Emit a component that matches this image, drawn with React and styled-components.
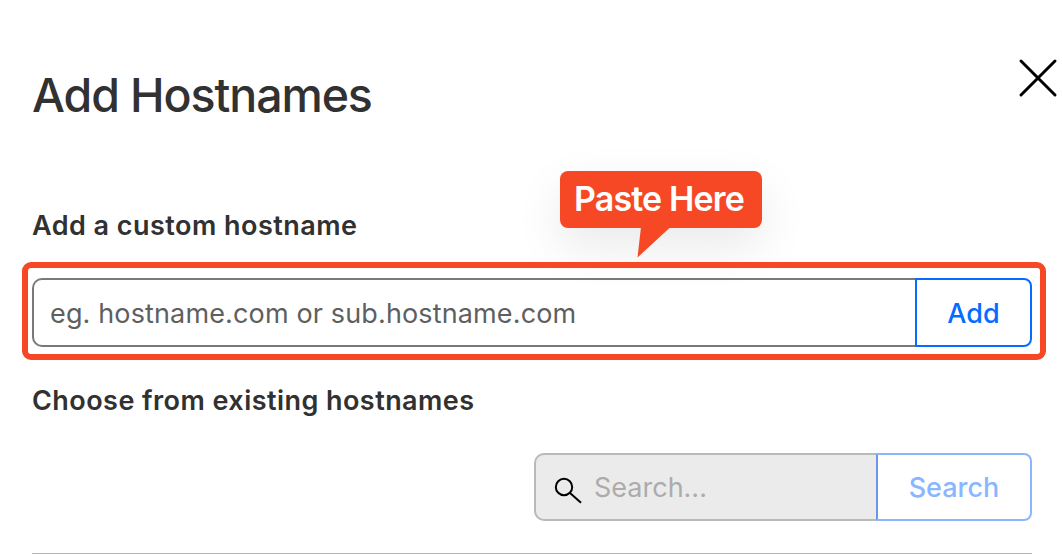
import { useState } from 'react';
import styled, { createGlobalStyle } from 'styled-components'

const GlobalStyle = createGlobalStyle`
*{
    box-sizing:border-box;
}
body{
    margin:0;
    background:#fff;
    overflow:hidden;
    font-family:Inter, "Liberation Sans", sans-serif;
}
`

export default () => {
    let [hostname, setHostname] = useState('');
    return (
        <Dialog>
            <GlobalStyle />
            <Header>
                <Title>Add Hostnames</Title>
                <Close aria-label="Close">
                    <svg width="40" height="40" viewBox="0 0 40 40" fill="none" stroke="#000" strokeWidth="3" strokeLinecap="round">
                        <path d="M3 3L37 37M37 3L3 37" />
                    </svg>
                </Close>
            </Header>
            <LabelRow>
                <Label spacing="0.47px">Add a custom hostname</Label>
                <Callout>
                    Paste Here
                    <Tail width="34" height="31" viewBox="0 0 34 31">
                        <path d="M4 0H33V0.5L0.5 30.5Z" fill="#f64825" />
                    </Tail>
                </Callout>
            </LabelRow>
            <Highlight>
                <Group>
                    <Input
                        value={hostname}
                        placeholder="eg. hostname.com or sub.hostname.com"
                        onChange={e => setHostname(e.target.value)}
                    />
                    <Button width="117px">Add</Button>
                </Group>
            </Highlight>
            <Existing spacing="0.45px">Choose from existing hostnames</Existing>
            <SearchGroup>
                <SearchBox>
                    <svg width="30" height="30" viewBox="0 0 30 30" fill="none" stroke="#000" strokeWidth="2">
                        <circle cx="11" cy="11" r="8.2" />
                        <path d="M17 17L28 26.7" />
                    </svg>
                    <SearchInput placeholder="Search..." disabled />
                </SearchBox>
                <Button width="156px" disabled>Search</Button>
            </SearchGroup>
            <Divider />
        </Dialog>
    )
}

const Dialog = styled.div`
display:flex;
flex-direction:column;
height:554px;
padding:0 30px 0 32px;
`
const Header = styled.div`
display:flex;
justify-content:space-between;
align-items:flex-start;
height:208px;
padding-top:58px;
margin-right:-26px;
`
const Title = styled.h1`
margin:9px 0 0;
font-size:46.5px;
line-height:56px;
font-weight:500;
letter-spacing:-1.1px;
color:#313131;
`
const Close = styled.button`
display:flex;
padding:0;
border:0;
background:none;
cursor:pointer;
`
const LabelRow = styled.div`
position:relative;
height:54px;
`
const Label = styled.div`
font-size:27px;
line-height:36px;
font-weight:600;
letter-spacing:${props => props.spacing};
color:#313131;
`
const Existing = styled(Label)`
height:34px;
margin-top:23px;
`
const Callout = styled.div`
position:absolute;
z-index:1;
left:528px;
top:-37px;
width:202px;
height:57px;
padding-left:14px;
border-radius:8px;
background:#f64825;
color:#fff;
font-size:34px;
line-height:55px;
font-weight:600;
letter-spacing:-0.85px;
white-space:nowrap;
box-shadow:0 18px 48px rgba(0,0,0,0.09);
`
const Tail = styled.svg`
position:absolute;
left:77px;
top:56px;
`
const Highlight = styled.div`
position:relative;
z-index:2;
height:98px;
margin:0 -14px 0 -10px;
padding:10px 8px 7px 4px;
border:6px solid #f64825;
border-radius:9px;
`
const Group = styled.div`
display:flex;
height:69px;
`
const Input = styled.input`
flex:1;
min-width:0;
padding:2px 16px 0;
border:2px solid #797979;
border-right:0;
border-radius:10px 0 0 10px;
background:transparent;
outline:none;
font-family:inherit;
font-size:27px;
letter-spacing:0.14px;
color:#313131;
&::placeholder{
    color:#5f5f5f;
    opacity:1;
}
`
const Button = styled.button`
flex:none;
width:${props => props.width};
padding:2px 0 0;
border:2px solid #056cff;
border-radius:0 8px 8px 0;
background:transparent;
font-family:inherit;
font-size:27px;
font-weight:500;
color:#056cff;
cursor:pointer;
&:disabled{
    padding-top:0;
    border-color:#8ab6ff;
    border-left-color:#6998e6;
    color:#8ab6ff;
    cursor:default;
}
`
const SearchGroup = styled.div`
display:flex;
align-self:flex-end;
width:498px;
height:68px;
margin-top:36px;
`
const SearchBox = styled.div`
display:flex;
flex:1;
min-width:0;
align-items:center;
padding-left:17px;
border:2px solid #b9b9b9;
border-right:0;
border-radius:10px 0 0 10px;
background:#ebebeb;
svg{
    flex:none;
    margin-top:7px;
}
`
const SearchInput = styled.input`
flex:1;
min-width:0;
height:100%;
padding:0 0 0 11px;
border:0;
background:transparent;
font-family:inherit;
font-size:27px;
&::placeholder{
    color:#acacac;
    opacity:1;
}
`
const Divider = styled.hr`
width:100%;
height:1px;
margin:32px 0 0;
border:0;
background:#b6b6b6;
`
